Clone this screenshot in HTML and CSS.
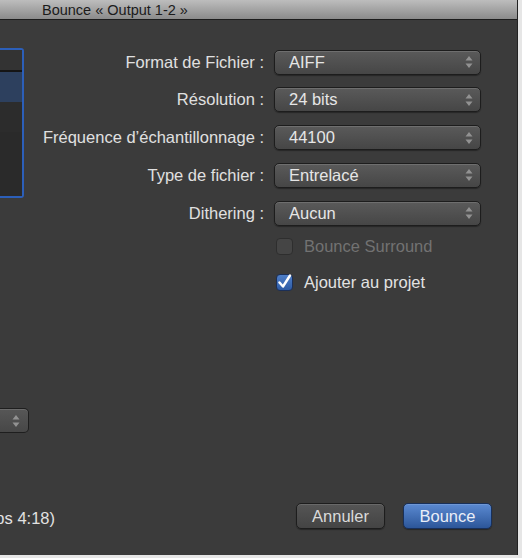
FILE: index.html
```
<!DOCTYPE html>
<html lang="fr">
<head>
<meta charset="utf-8">
<title>Bounce « Output 1-2 »</title>
<link rel="stylesheet" href="styles.css">
</head>
<body>
<div class="window">
  <div class="titlebar">Bounce « Output 1-2 »</div>
  <div class="content">
    <div class="left">
      <div class="list">
        <div class="list-head"></div>
        <div class="list-row selected"></div>
        <div class="list-row"></div>
      </div>
      <div class="side-popup">
        <span class="arrows"><svg width="8" height="14" viewBox="0 0 8 14"><path d="M4 1 L7.5 5.5 H0.5 Z M4 13 L7.5 8.5 H0.5 Z" fill="#929292"/></svg></span>
      </div>
      <div class="status"><span>Durée (en temps 4:18)</span></div>
    </div>
    <div class="main">
      <div class="form">
        <label class="lbl">Format de Fichier :</label>
        <div class="popup"><span>AIFF</span><svg class="arr" width="8" height="14" viewBox="0 0 8 14"><path d="M4 1 L7.5 5.5 H0.5 Z M4 13 L7.5 8.5 H0.5 Z" fill="#929292"/></svg></div>
        <label class="lbl">Résolution :</label>
        <div class="popup"><span>24 bits</span><svg class="arr" width="8" height="14" viewBox="0 0 8 14"><path d="M4 1 L7.5 5.5 H0.5 Z M4 13 L7.5 8.5 H0.5 Z" fill="#929292"/></svg></div>
        <label class="lbl">Fréquence d’échantillonnage :</label>
        <div class="popup"><span>44100</span><svg class="arr" width="8" height="14" viewBox="0 0 8 14"><path d="M4 1 L7.5 5.5 H0.5 Z M4 13 L7.5 8.5 H0.5 Z" fill="#929292"/></svg></div>
        <label class="lbl">Type de fichier :</label>
        <div class="popup"><span>Entrelacé</span><svg class="arr" width="8" height="14" viewBox="0 0 8 14"><path d="M4 1 L7.5 5.5 H0.5 Z M4 13 L7.5 8.5 H0.5 Z" fill="#929292"/></svg></div>
        <label class="lbl">Dithering :</label>
        <div class="popup"><span>Aucun</span><svg class="arr" width="8" height="14" viewBox="0 0 8 14"><path d="M4 1 L7.5 5.5 H0.5 Z M4 13 L7.5 8.5 H0.5 Z" fill="#929292"/></svg></div>
      </div>
      <div class="checks">
        <div class="check disabled"><span class="box"></span><span>Bounce Surround</span></div>
        <div class="check"><span class="box on"><svg width="17" height="17" viewBox="0 0 17 17"><path d="M3.5 8.5 L7 12.5 L14 1.5" fill="none" stroke="#fff" stroke-width="2.4" stroke-linecap="round" stroke-linejoin="round"/></svg></span><span>Ajouter au projet</span></div>
      </div>
      <div class="actions">
        <button class="btn">Annuler</button>
        <button class="btn primary">Bounce</button>
      </div>
    </div>
  </div>
</div>
</body>
</html>
```
FILE: styles.css
```
html, body { margin: 0; padding: 0; }
body {
  background: #e6e6e6;
  width: 522px;
  height: 558px;
  overflow: hidden;
  font-family: "Liberation Sans", Arial, sans-serif;
}
.window {
  width: 518px;
  height: 555px;
  background: #3b3b3b;
  display: flex;
  flex-direction: column;
  border-right: 1px solid #222;
  box-sizing: border-box;
}
.titlebar {
  height: 19px;
  flex: none;
  background: linear-gradient(#bdbdbd, #8b8b8b);
  border-bottom: 1px solid #1c1c1c;
  color: #1b1b1b;
  font-size: 14.5px;
  line-height: 20px;
  padding-left: 42px;
  box-sizing: content-box;
}
.content {
  flex: 1;
  display: flex;
}
.left {
  width: 30px;
  flex: none;
  display: flex;
  flex-direction: column;
}
.list {
  margin-top: 28px;
  width: 24px;
  height: 150px;
  box-sizing: border-box;
  border: 2px solid #2c5fb9;
  border-left: none;
  border-radius: 0 3px 3px 0;
  background: #2a2a2a;
  overflow: hidden;
}
.list-head {
  height: 20px;
  background: #333;
  border-bottom: 2px solid #151515;
}
.list-row { height: 30px; background: #2c2c2c; }
.list-row.selected { background: #2d405e; }
.side-popup {
  margin-top: 210px;
  width: 29px;
  height: 25px;
  box-sizing: border-box;
  border: 1px solid #1e1e1e;
  border-left: none;
  border-radius: 0 5px 5px 0;
  background: linear-gradient(#575757, #474747);
  box-shadow: inset 0 1px 0 rgba(255,255,255,0.12);
  display: flex;
  align-items: center;
  justify-content: flex-end;
  padding-right: 8px;
}
.arrows { display: flex; }
.status {
  margin-top: 76px;
  width: 55px;
  overflow: hidden;
  display: flex;
  justify-content: flex-end;
  white-space: nowrap;
  color: #e2e2e2;
  font-size: 16.5px;
}
.main {
  flex: 1;
  display: flex;
  flex-direction: column;
}
.form {
  margin-top: 29px;
  display: grid;
  grid-template-columns: 234px 207px;
  column-gap: 10px;
  grid-auto-rows: 26px;
  row-gap: 11.75px;
  align-items: center;
}
.lbl {
  text-align: right;
  color: #e0e0e0;
  font-size: 16.5px;
  white-space: nowrap;
}
.popup {
  height: 25px;
  box-sizing: border-box;
  border: 1px solid #1d1d1d;
  border-radius: 5px;
  background: linear-gradient(#5a5a5a, #464646);
  box-shadow: inset 0 1px 0 rgba(255,255,255,0.13), 0 1px 1px rgba(0,0,0,0.35);
  display: flex;
  align-items: center;
  justify-content: space-between;
  padding: 0 7px 0 14px;
  color: #e6e6e6;
  font-size: 16.5px;
}
.checks {
  margin-left: 246px;
  margin-top: 12px;
  display: flex;
  flex-direction: column;
  gap: 19px;
}
.check {
  display: flex;
  align-items: center;
  gap: 11px;
  color: #e2e2e2;
  font-size: 16.5px;
  height: 17px;
}
.check.disabled { color: #727272; }
.box {
  width: 17px;
  height: 17px;
  box-sizing: border-box;
  border-radius: 4px;
  border: 1px solid #2e2e2e;
  background: #454545;
  display: flex;
  overflow: visible;
}
.box.on {
  background: linear-gradient(#4f7fc8, #2e5ba4);
  border-color: #1b2f57;
}
.box svg { margin: -1px; }
.actions {
  margin-top: auto;
  margin-bottom: 26px;
  display: flex;
  justify-content: flex-end;
  gap: 18px;
  margin-right: 25px;
}
.btn {
  width: 89px;
  height: 26px;
  box-sizing: border-box;
  border-radius: 5px;
  border: 1px solid #1d1d1d;
  background: linear-gradient(#555, #444);
  box-shadow: inset 0 1px 0 rgba(255,255,255,0.12), 0 1px 1px rgba(0,0,0,0.35);
  color: #dadada;
  font-family: "Liberation Sans", Arial, sans-serif;
  font-size: 16.5px;
  padding: 0;
}
.btn.primary {
  background: linear-gradient(#5b8ad2, #2c5699);
  border-color: #18305a;
  color: #e9eef8;
}
```
